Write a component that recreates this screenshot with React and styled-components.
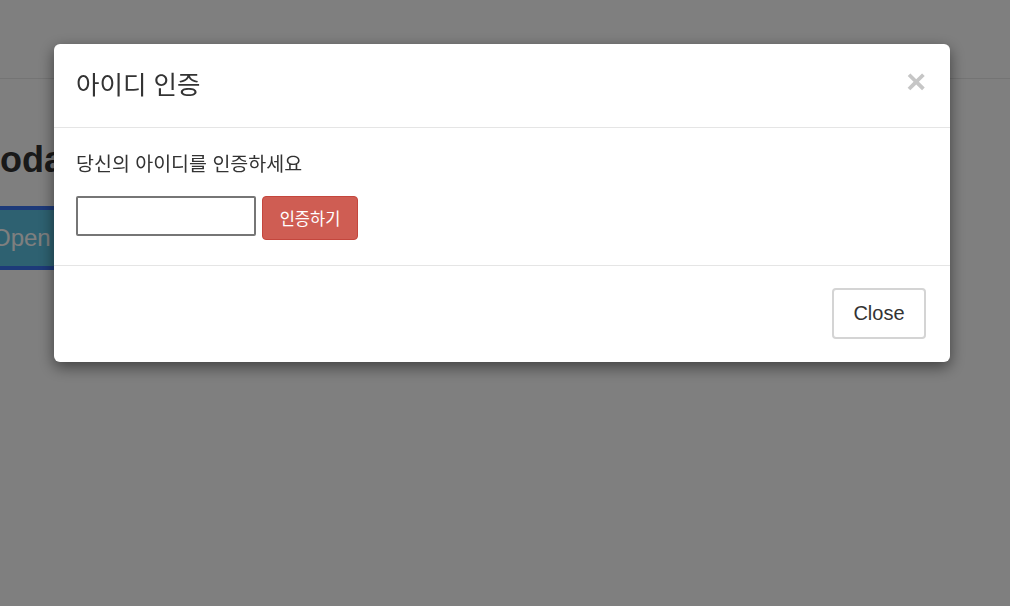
import styled, { createGlobalStyle } from "styled-components";

const GlobalStyle = createGlobalStyle`
  html, body {
    margin: 0;
    padding: 0;
    background: #fff;
    overflow: hidden;
  }
  body {
    font-family: "Liberation Sans", "Noto Sans CJK KR", sans-serif;
    color: #333;
  }
`;

export default function App() {
  return (
    <>
      <GlobalStyle />
      <Page>
        <Navbar />
        <Content>
          <Heading>Modal Example</Heading>
          <OpenButton>Open Modal</OpenButton>
        </Content>
      </Page>

      {/* 모달 */}
      <Backdrop>
        <Dialog>
          <Header>
            <Title>아이디 인증</Title>
            <CloseX>×</CloseX>
          </Header>
          <Body>
            <Message>당신의 아이디를 인증하세요</Message>
            <Row>
              <IdInput type="text" />
              <SubmitButton>인증하기</SubmitButton>
            </Row>
          </Body>
          <Footer>
            <CloseButton>Close</CloseButton>
          </Footer>
        </Dialog>
      </Backdrop>
    </>
  );
}

const Page = styled.div`
  width: 1010px;
  height: 606px;
`;

const Navbar = styled.div`
  height: 78px;
  border-bottom: 1px solid #e8e8e8;
`;

const Content = styled.div`
  margin-left: -30px;
  padding-top: 61px;
`;

const Heading = styled.h1`
  margin: 0 0 26px;
  font-size: 36px;
  line-height: 40px;
  font-weight: bold;
  color: #333;
  white-space: nowrap;
`;

const OpenButton = styled.button`
  height: 64px;
  padding: 0 18px;
  border: 4px solid #3b74f2;
  border-radius: 4px;
  background: #5cc3e2;
  color: #fff;
  font-family: "Liberation Sans", sans-serif;
  font-size: 24px;
`;

const Backdrop = styled.div`
  position: fixed;
  inset: 0;
  background: rgba(0, 0, 0, 0.5);
  display: flex;
  justify-content: flex-start;
  align-items: flex-start;
  padding: 44px 0 0 54px;
`;

const Dialog = styled.div`
  width: 896px;
  background: #fff;
  border-radius: 6px;
  box-shadow: 0 5px 15px rgba(0, 0, 0, 0.5);
`;

const Header = styled.div`
  box-sizing: border-box;
  height: 84px;
  padding: 0 24px 7px 22px;
  display: flex;
  align-items: center;
  justify-content: space-between;
  border-bottom: 1px solid #e5e5e5;
`;

const Title = styled.h4`
  margin: 0;
  font-size: 25.5px;
  font-weight: normal;
  color: #333;
`;

const CloseX = styled.span`
  font-family: "Liberation Sans", sans-serif;
  font-size: 34px;
  font-weight: bold;
  line-height: 1;
  color: #c6c6c6;
  margin-top: -2px;
  cursor: pointer;
`;

const Body = styled.div`
  padding: 23px 22px 25px;
  border-bottom: 1px solid #e5e5e5;
`;

const Message = styled.p`
  margin: 0 0 19px;
  font-size: 19.5px;
  line-height: 26px;
  color: #333;
`;

const Row = styled.div`
  display: flex;
  align-items: flex-start;
  gap: 6px;
`;

const IdInput = styled.input`
  box-sizing: border-box;
  width: 180px;
  height: 40px;
  border: 2px solid #767676;
  border-radius: 2px;
  padding: 0 6px;
  font-size: 16px;
`;

const SubmitButton = styled.button`
  box-sizing: border-box;
  width: 96px;
  height: 44px;
  border: 1px solid #c4463d;
  border-radius: 4px;
  background: #cf5d53;
  color: #fff;
  font-family: "Liberation Sans", "Noto Sans CJK KR", sans-serif;
  font-size: 16.5px;
`;

const Footer = styled.div`
  padding: 22px 24px 23px;
  display: flex;
  justify-content: flex-end;
`;

const CloseButton = styled.button`
  box-sizing: border-box;
  width: 94px;
  height: 51px;
  border: 2px solid #d4d4d4;
  border-radius: 4px;
  background: #fff;
  color: #333;
  font-family: "Liberation Sans", sans-serif;
  font-size: 20px;
`;
